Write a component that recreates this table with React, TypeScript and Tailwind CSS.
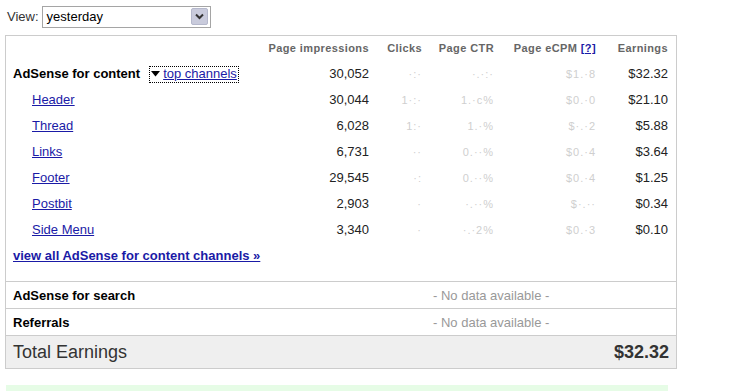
import React from "react";

const rows = [
  { name: "Header", imp: "30,044", clicks: "1·:·", ctr: "1.·c%", ecpm: "$0.·0", earn: "$21.10" },
  { name: "Thread", imp: "6,028", clicks: "1:·", ctr: "1.·%", ecpm: "$·.·2", earn: "$5.88" },
  { name: "Links", imp: "6,731", clicks: "··", ctr: "0.··%", ecpm: "$0.·4", earn: "$3.64" },
  { name: "Footer", imp: "29,545", clicks: "·:", ctr: "0.··%", ecpm: "$0.·4", earn: "$1.25" },
  { name: "Postbit", imp: "2,903", clicks: "·", ctr: "·.··%", ecpm: "$·.··", earn: "$0.34" },
  { name: "Side Menu", imp: "3,340", clicks: "·", ctr: "·.·2%", ecpm: "$0.·3", earn: "$0.10" },
];

const grid = "grid grid-cols-[245px_111px_53px_72px_102px_72px] items-center";
const faint = "text-[#cfcfcf] text-[11px] tracking-[1px]";

export default function App() {
  return (
    <div className="w-[734px] h-[391px] bg-white overflow-hidden text-[13px] text-[#222]" style={{ fontFamily: "Arial, 'Liberation Sans', sans-serif" }}>
      <div className="flex items-center h-[33px] pl-[7px]">
        <span className="text-[#333] mr-[3px]">View:</span>
        <div className="w-[169px] h-[22px] border border-[#a5a5a5] flex items-center justify-between pl-[4px] pr-[2px]">
          <span className="text-black">yesterday</span>
          <div className="w-[17px] h-[17px] bg-[#c9cbdc] border border-[#b5b8cc] rounded-[2px] flex items-center justify-center">
            <svg width="9" height="7" viewBox="0 0 9 7"><path d="M1 1.5 L4.5 5 L8 1.5" fill="none" stroke="#333" strokeWidth="2" /></svg>
          </div>
        </div>
      </div>
      <div className="ml-[5px] mt-[2px] w-[672px] border border-[#cccccc]">
        <div className={`${grid} h-[25px] pl-[7px] text-[11px] font-bold text-[#666] tracking-[0.4px]`}>
          <span />
          <span className="text-right">Page impressions</span>
          <span className="text-right">Clicks</span>
          <span className="text-right">Page CTR</span>
          <span className="text-right">Page eCPM <span className="text-[#1a1aa6] underline">[?]</span></span>
          <span className="text-right">Earnings</span>
        </div>
        <div className={`${grid} h-[26px] pl-[7px]`}>
          <span className="flex items-center">
            <span className="font-bold text-black">AdSense for content</span>
            <span className="ml-[10px] flex items-center outline-1 outline-dotted outline-black px-[1px] h-[15px]">
              <svg width="9" height="6" viewBox="0 0 9 6" className="mr-[3px]"><path d="M0 0 H9 L4.5 5.5 Z" fill="#000" /></svg>
              <span className="text-[#1a1aa6] underline">top channels</span>
            </span>
          </span>
          <span className="text-right">30,052</span>
          <span className={`text-right ${faint}`}>·:·</span>
          <span className={`text-right ${faint}`}>·.·:·</span>
          <span className={`text-right ${faint}`}>$1.·8</span>
          <span className="text-right">$32.32</span>
        </div>
        {rows.map((r) => (
          <div key={r.name} className={`${grid} h-[26px] pl-[7px]`}>
            <span className="pl-[19px]"><span className="text-[#1a1aa6] underline">{r.name}</span></span>
            <span className="text-right">{r.imp}</span>
            <span className={`text-right ${faint}`}>{r.clicks}</span>
            <span className={`text-right ${faint}`}>{r.ctr}</span>
            <span className={`text-right ${faint}`}>{r.ecpm}</span>
            <span className="text-right">{r.earn}</span>
          </div>
        ))}
        <div className="h-[26px] flex items-center pl-[7px]">
          <span className="font-bold text-[#1a1aa6] underline">view all AdSense for content channels »</span>
        </div>
        <div className="h-[13px] border-b border-[#cccccc]" />
        <div className="h-[27px] flex items-center pl-[7px] pt-[1px] border-b border-[#cccccc]">
          <span className="w-[245px] font-bold text-black">AdSense for search</span>
          <span className="pl-[175px] text-[#999]">- No data available -</span>
        </div>
        <div className="h-[27px] flex items-center pl-[7px] pt-[1px] border-b border-[#cccccc]">
          <span className="w-[245px] font-bold text-black">Referrals</span>
          <span className="pl-[175px] text-[#999]">- No data available -</span>
        </div>
        <div className="h-[32px] flex items-center justify-between pl-[7px] pr-[7px] bg-[#efefef] text-[18px] text-[#333]">
          <span>Total Earnings</span>
          <span className="font-bold">$32.32</span>
        </div>
      </div>
      <div className="ml-[6px] mt-[16px] w-[662px] h-[10px] bg-[#e6fce6]" />
    </div>
  );
}
